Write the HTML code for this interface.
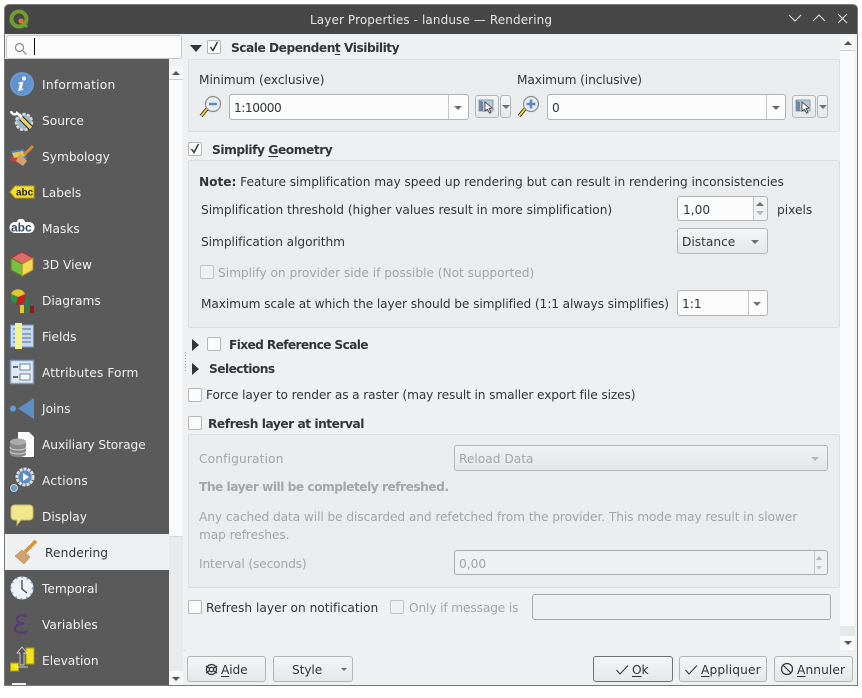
<!DOCTYPE html>
<html><head><meta charset="utf-8"><style>
html,body{margin:0;padding:0;background:#fff;width:862px;height:698px;overflow:hidden}
*{box-sizing:border-box}
body{font-family:"DejaVu Sans","Liberation Sans",sans-serif;font-size:12.2px;color:#31363b}
#w{position:absolute;left:4px;top:4px;width:854px;height:682px;background:#7a7a7a;border-radius:5px 5px 0 0}
.a{position:absolute}
.t{position:absolute;white-space:nowrap;line-height:18px;height:18px;transform:translateY(1px)}
.b{font-weight:bold}
.d{color:#a3a5a7}
.s{color:#f2f2f2}
.g{position:absolute;left:188px;width:652px;background:#ebecee;border:1px solid #dcdee0;border-radius:2px}
.c{position:absolute;width:14px;height:14px;background:#fcfcfc;border:1px solid #b5b6b8;border-radius:2px}
.c.dis{background:#eff0f1;border-color:#c3c4c6}
.f{position:absolute;background:#fcfcfc;border:1px solid #b3b5b7;border-radius:3px}
.btn{position:absolute;background:linear-gradient(#f4f5f5,#e6e7e8);border:1px solid #b3b5b7;border-radius:3px}
.dv{position:absolute;top:0;bottom:0;width:1px;background:#c4c6c8}
.ar{position:absolute;width:0;height:0;border-left:4px solid transparent;border-right:4px solid transparent;border-top:4px solid #6d7073}
.up{position:absolute;width:0;height:0;border-left:4px solid transparent;border-right:4px solid transparent;border-bottom:4px solid #6d7073}
svg{position:absolute;overflow:visible}
u{text-decoration-thickness:1px;text-underline-offset:2px}
</style></head><body>
<div id="w"></div>
<div class="a" style="left:5px;top:5px;width:852px;height:29px;background:#474747;border-radius:4px 4px 0 0"></div>
<div class="a" style="left:5px;top:34px;width:852px;height:651px;background:#eff0f1"></div>

<svg style="left:9px;top:9px" width="21" height="21" viewBox="0 0 21 21"><circle cx="10" cy="10" r="7.5" fill="none" stroke="#6f9e2e" stroke-width="4"/><path d="M11 11l7 7" stroke="#6f9e2e" stroke-width="3"/><circle cx="12" cy="12" r="2.5" fill="#e0762c"/></svg>
<div class="t s" style="left:310px;top:10px;font-size:12px;color:#e6e6e6;letter-spacing:.11px">Layer Properties - landuse — Rendering</div>
<svg style="left:788px;top:13px" width="64" height="12" viewBox="0 0 64 12" fill="none" stroke="#e8e8e8" stroke-width="1"><path d="M1 2l6 6 6-6M25 8l6-6 6 6M50 1l9 9M59 1l-9 9"/></svg>

<!-- search -->
<div class="a" style="left:6px;top:35px;width:176px;height:24px;background:#fcfcfc;border:1px solid #c4c6c8;border-radius:3px"></div>
<svg style="left:14px;top:42px" width="14" height="14" fill="none" stroke="#8a8a8a" stroke-width="1.2"><circle cx="5.5" cy="5.5" r="4"/><path d="M8.5 8.5l4 4"/></svg>
<div class="a" style="left:34px;top:38px;width:1px;height:17px;background:#111"></div>

<!-- sidebar -->
<div class="a" style="left:5px;top:59px;width:164px;height:626px;background:#5a5a5a"></div>
<div class="a" style="left:5px;top:534px;width:164px;height:36px;background:#eff0f1"></div>
<div class="a" style="left:169px;top:59px;width:14px;height:626px;background:#eff0f1"></div>
<div class="a" style="left:169px;top:66px;width:14px;height:470px;background:#fafafa"></div>
<div class="a" style="left:169px;top:536px;width:14px;height:135px;background:#e9eaeb;border-top:1px solid #d5d6d8"></div>
<div class="a" style="left:169px;top:66px;width:14px;height:14px;background:#f8f8f8;border-bottom:1px solid #c9cbcd"></div>
<div class="a" style="left:169px;top:671px;width:14px;height:14px;background:#f8f8f8"></div>
<div class="up" style="left:172px;top:71px;border-bottom-color:#555"></div>
<div class="ar" style="left:172px;top:677px;border-top-color:#555"></div>

<div class="t s" style="left:42px;top:75px;letter-spacing:.27px">Information</div>
<div class="t s" style="left:42px;top:111px">Source</div>
<div class="t s" style="left:42px;top:147px">Symbology</div>
<div class="t s" style="left:42px;top:183px">Labels</div>
<div class="t s" style="left:42px;top:219px">Masks</div>
<div class="t s" style="left:42px;top:255px">3D View</div>
<div class="t s" style="left:42px;top:291px">Diagrams</div>
<div class="t s" style="left:42px;top:327px">Fields</div>
<div class="t s" style="left:42px;top:363px;letter-spacing:.12px">Attributes Form</div>
<div class="t s" style="left:42px;top:399px">Joins</div>
<div class="t s" style="left:42px;top:435px;letter-spacing:-.06px">Auxiliary Storage</div>
<div class="t s" style="left:42px;top:471px;letter-spacing:.2px">Actions</div>
<div class="t s" style="left:42px;top:507px">Display</div>
<div class="t" style="left:45px;top:543px;letter-spacing:.1px">Rendering</div>
<div class="t s" style="left:42px;top:579px">Temporal</div>
<div class="t s" style="left:42px;top:615px">Variables</div>
<div class="t s" style="left:42px;top:651px">Elevation</div>

<svg style="left:10px;top:72px" width="24" height="24" viewBox="0 0 24 24"><circle cx="12" cy="12" r="12" fill="#6a9bd2"/><circle cx="12" cy="12" r="10" fill="#5f92cf"/><path d="M8.500 10.500l5-1-2 7.500 2-.5-.5 1.500-5 1 2-7.500-2 .5z" fill="#fff"/><circle cx="14" cy="6.500" r="2" fill="#fff"/></svg>
<svg style="left:10px;top:108px" width="24" height="24" viewBox="0 0 24 24"><circle cx="14" cy="14" r="8" fill="#9fb4cf" stroke="#d8d8d8" stroke-width="2.500" stroke-dasharray="3 1.500"/><path d="M1 3c1 4 5 4 6 2l5 5" stroke="#fff" stroke-width="2.500" fill="none"/><path d="M11 10l10 10" stroke="#222" stroke-width="5.500"/><path d="M11 10l10 10" stroke="#ecd25b" stroke-width="3.500"/></svg>
<svg style="left:10px;top:145px" width="24" height="22" viewBox="0 0 24 22"><path d="M1 6l13-2 3 10L4 12z" fill="#4c7fc0"/><path d="M1 12l10 0 3 7-4 0L0 15z" fill="#d13a3a"/><path d="M2 8l11-2 2 5-11 2z" fill="#e5c94d"/><path d="M10 8l7 8-4 5-7-5z" fill="#d3a36b"/><path d="M14 10l9-9" stroke="#d88a32" stroke-width="3"/></svg>
<svg style="left:10px;top:185px" width="24" height="14" viewBox="0 0 24 14"><path d="M5 1h19v12H5L0 7z" fill="#f5dd29" stroke="#b89f10"/><text x="6" y="10.5" font-family="Liberation Sans" font-size="10" font-weight="bold" fill="#222">abc</text></svg>
<svg style="left:9px;top:219px" width="26" height="16" viewBox="0 0 26 16"><rect x="0.5" y="3" width="25" height="11" rx="5.5" fill="#fff"/><rect x="8" y="0" width="8" height="6" rx="3" fill="#fff"/><text x="2" y="12.5" font-family="Liberation Sans" font-size="12" font-weight="bold" fill="#3a4a66">abc</text></svg>
<svg style="left:10px;top:251px" width="24" height="26" viewBox="0 0 24 26"><path d="M12 1l11 6-11 6L1 7z" fill="#e06a6a" stroke="#a33"/><path d="M1 7l11 6v12L1 19z" fill="#7bc043" stroke="#597f20"/><path d="M23 7l-11 6v12l11-6z" fill="#f3d94e" stroke="#a6902a"/></svg>
<svg style="left:10px;top:288px" width="24" height="26" viewBox="0 0 24 26"><circle cx="8" cy="9" r="7.5" fill="#c21f1f"/><path d="M8 9L1 6a7.500 7.500 0 0 1 14 0z" fill="#e6c42c"/><path d="M8 9L1 6a7.500 7.500 0 0 0 5 10z" fill="#2a9444"/><rect x="10" y="17" width="4" height="8" fill="#ecc51d"/><rect x="15" y="10" width="4" height="15" fill="#2a7d4a"/><rect x="20" y="18" width="4" height="7" fill="#8c1d1d"/></svg>
<svg style="left:10px;top:323px" width="24" height="26" viewBox="0 0 24 26"><rect x="0.500" y="2" width="23" height="22" fill="#c7d8ec" stroke="#6e93bf"/><path d="M3 6h18M3 11h18M3 15h18M3 19h18" stroke="#6e93bf" stroke-width="1.500"/><rect x="5" y="0" width="7" height="26" fill="#f4f28a"/></svg>
<svg style="left:10px;top:360px" width="24" height="24" viewBox="0 0 24 24"><rect x="0.500" y="0.500" width="23" height="23" fill="#e3e8ee" stroke="#7c9dc3" stroke-width="1.500"/><rect x="10" y="4" width="10" height="6" fill="#fff" stroke="#5b84b5"/><rect x="10" y="14" width="10" height="6" fill="#fff" stroke="#5b84b5"/><path d="M3 7h5M3 17h5" stroke="#4d6f99" stroke-width="2"/></svg>
<svg style="left:9px;top:397px" width="26" height="23" viewBox="0 0 26 23"><circle cx="4" cy="11.500" r="3" fill="#6a9bd2"/><path d="M25 1v21L9 11.500z" fill="#5f8ec4"/></svg>
<svg style="left:9px;top:431px" width="26" height="27" viewBox="0 0 26 27"><path d="M9 1h11l5 5v20H9z" fill="#fff"/><ellipse cx="9" cy="11" rx="8" ry="3.500" fill="#aaa"/><path d="M1 11v12c0 4 16 4 16 0V11c0 4-16 4-16 0z" fill="#888"/><path d="M1 16c0 4 16 4 16 0M1 20c0 4 16 4 16 0" stroke="#ccc" fill="none"/></svg>
<svg style="left:9px;top:467px" width="26" height="26" viewBox="0 0 26 26"><circle cx="16" cy="10" r="8" fill="#5c8cc4" stroke="#ddd" stroke-width="3" stroke-dasharray="3 1"/><path d="M14 6l6 4-6 4z" fill="#fff"/><circle cx="5" cy="21" r="3.500" fill="#6a9bd2" stroke="#ccc"/></svg>
<svg style="left:10px;top:504px" width="24" height="23" viewBox="0 0 24 23"><path d="M5 1h14q4 0 4 4v7q0 4-4 4H11l-4 5 0-5H5q-4 0-4-4V5q0-4 4-4z" fill="#f0e68c" stroke="#c9b95c"/></svg>
<svg style="left:14px;top:540px" width="24" height="25" viewBox="0 0 24 25"><path d="M8 10l8 7-6 7-9-8z" fill="#cfa36e" stroke="#a37a48" stroke-width=".5"/><path d="M11 12l11-11" stroke="#d8913f" stroke-width="3.500"/></svg>
<svg style="left:10px;top:576px" width="24" height="24" viewBox="0 0 24 24"><circle cx="12" cy="12" r="11.500" fill="#eef1f5"/><circle cx="12" cy="12" r="10.700" fill="none" stroke="#7ea3cc" stroke-width="1.500" stroke-dasharray="1.500 4"/><path d="M12 4v9l5 4" stroke="#444" stroke-width="1.300" fill="none"/></svg>
<svg style="left:13px;top:614px" width="17" height="20" viewBox="0 0 17 20" fill="none" stroke="#5c3a78" stroke-width="2.400"><path d="M14 2.500C10 .5 4 1 4 5c0 3 3 4.500 7 4.500C6 9.500 2 11 2 14.500c0 4.500 8 5 13 2.500"/></svg>
<svg style="left:10px;top:646px" width="24" height="26" viewBox="0 0 24 26"><rect x="16" y="2" width="8" height="16" fill="#f3e21b" stroke="#a89a12"/><rect x="0.500" y="17" width="8" height="8" fill="#f3e21b" stroke="#a89a12"/><path d="M12 1l-5 6h3v12h4V7h3zM5 21h13" fill="#555" stroke="#eee" stroke-width=".7"/></svg>
<div class="a" style="left:12px;top:683px;width:14px;height:2px;background:#eee"></div>

<!-- right scrollbar -->
<div class="a" style="left:840px;top:36px;width:15px;height:614px;background:#fafafa"></div>
<div class="a" style="left:840px;top:36px;width:15px;height:15px;background:#f6f6f6;border-bottom:1px solid #c9cbcd"></div>
<div class="up" style="left:844px;top:41px;border-bottom-color:#555"></div>
<div class="a" style="left:840px;top:626px;width:15px;height:10px;background:#e6e7e8"></div>
<div class="ar" style="left:844px;top:641px;border-top-color:#555"></div>
<div class="a" style="left:183px;top:650px;width:3px;height:1px;background:#dcdee0"></div>
<svg style="left:185px;top:352px" width="2" height="20"><path d="M.5 0v20" stroke="#a6a8aa" stroke-dasharray="1 2"/></svg>

<!-- group 1 -->
<svg style="left:190px;top:45px" width="12" height="7"><path d="M0 0h12L6 7z" fill="#31363b"/></svg>
<div class="c" style="left:207px;top:40px"></div>
<svg style="left:209px;top:41px" width="11" height="11" fill="none" stroke="#31363b" stroke-width="1.500"><path d="M1.500 6l2.500 3.500L8.500 1"/></svg>
<div class="t b" style="left:231px;top:38px;letter-spacing:-.48px">Scale Dependen<u>t</u> Visibility</div>
<div class="g" style="top:59px;height:73px"></div>
<div class="t" style="left:199px;top:70px;letter-spacing:-.05px">Minimum (exclusive)</div>
<div class="t" style="left:517px;top:70px;letter-spacing:-.1px">Maximum (inclusive)</div>
<svg style="left:199px;top:95px" width="24" height="24" viewBox="0 0 24 24"><circle cx="14" cy="9" r="7.500" fill="#e8edf3" stroke="#8a8f94" stroke-width="1.200"/><path d="M10 9h8" stroke="#5b8bc2" stroke-width="2.500"/><path d="M8 14l-6 7" stroke="#222" stroke-width="3.500"/><path d="M8 14l-6 7" stroke="#ecd23a" stroke-width="2"/></svg>
<div class="f" style="left:229px;top:94px;width:240px;height:26px"><div class="dv" style="left:218px"></div><div class="ar" style="left:224px;top:11px"></div></div>
<div class="t" style="left:234px;top:98px;letter-spacing:-.47px">1:10000</div>
<div class="btn" style="left:475px;top:95px;width:24px;height:23px"></div>
<svg style="left:479px;top:99px" width="16" height="15" viewBox="0 0 16 15"><rect x="0" y="1" width="14" height="11" fill="#b9c6d6" stroke="#8da0b5"/><path d="M0 1l4 2v9H0z" fill="#6f87a3"/><path d="M6 3l7 6-3 .5 2 4-1.500 .7-2-4L6 12z" fill="#fff" stroke="#333" stroke-width=".8"/></svg>
<div class="btn" style="left:500px;top:95px;width:11px;height:23px"><div class="ar" style="left:1px;top:9px"></div></div>
<svg style="left:517px;top:95px" width="24" height="24" viewBox="0 0 24 24"><circle cx="14" cy="9" r="7.500" fill="#e8edf3" stroke="#8a8f94" stroke-width="1.200"/><path d="M9.500 9h9M14 4.500v9" stroke="#5b8bc2" stroke-width="2.500"/><path d="M8 14l-6 7" stroke="#222" stroke-width="3.500"/><path d="M8 14l-6 7" stroke="#ecd23a" stroke-width="2"/></svg>
<div class="f" style="left:547px;top:94px;width:239px;height:26px"><div class="dv" style="left:218px"></div><div class="ar" style="left:224px;top:11px"></div></div>
<div class="t" style="left:552px;top:98px">0</div>
<div class="btn" style="left:792px;top:95px;width:24px;height:23px"></div>
<svg style="left:796px;top:99px" width="16" height="15" viewBox="0 0 16 15"><rect x="0" y="1" width="14" height="11" fill="#b9c6d6" stroke="#8da0b5"/><path d="M0 1l4 2v9H0z" fill="#6f87a3"/><path d="M6 3l7 6-3 .5 2 4-1.500 .7-2-4L6 12z" fill="#fff" stroke="#333" stroke-width=".8"/></svg>
<div class="btn" style="left:817px;top:95px;width:11px;height:23px"><div class="ar" style="left:1px;top:9px"></div></div>

<!-- group 2 -->
<div class="c" style="left:188px;top:142px"></div>
<svg style="left:190px;top:143px" width="11" height="11" fill="none" stroke="#31363b" stroke-width="1.500"><path d="M1.500 6l2.500 3.500L8.500 1"/></svg>
<div class="t b" style="left:212px;top:140px;letter-spacing:-.43px">Simplify <u>G</u>eometry</div>
<div class="g" style="top:160px;height:168px"></div>
<div class="t" style="left:199px;top:172px;letter-spacing:-.045px"><b>Note:</b> Feature simplification may speed up rendering but can result in rendering inconsistencies</div>
<div class="t" style="left:201px;top:200px;letter-spacing:-.04px">Simplification threshold (higher values result in more simplification)</div>
<div class="f" style="left:677px;top:196px;width:91px;height:25px;background:linear-gradient(90deg,#fcfcfc 75px,#f0f1f2 75px)"><div class="dv" style="left:75px"></div></div>
<div class="t" style="left:683px;top:200px">1,00</div>
<div class="up" style="left:756px;top:202px"></div>
<div class="ar" style="left:756px;top:211px;border-top-color:#b5b7b9"></div>
<div class="t" style="left:777px;top:200px">pixels</div>
<div class="t" style="left:201px;top:232px;letter-spacing:-.06px">Simplification algorithm</div>
<div class="btn" style="left:677px;top:228px;width:91px;height:26px"><div class="ar" style="left:73px;top:11px"></div></div>
<div class="t" style="left:682px;top:232px">Distance</div>
<div class="c dis" style="left:200px;top:265px"></div>
<div class="t d" style="left:218px;top:263px;letter-spacing:-.02px">Simplify on provider side if possible (Not supported)</div>
<div class="t" style="left:201px;top:294px;letter-spacing:-.1px">Maximum scale at which the layer should be simplified (1:1 always simplifies)</div>
<div class="f" style="left:677px;top:290px;width:91px;height:26px"><div class="dv" style="left:70px"></div><div class="ar" style="left:75px;top:11px"></div></div>
<div class="t" style="left:682px;top:294px">1:1</div>

<!-- collapsed -->
<svg style="left:192px;top:339px" width="7" height="12"><path d="M0 0l7 6-7 6z" fill="#31363b"/></svg>
<div class="c" style="left:207px;top:337px"></div>
<div class="t b" style="left:229px;top:335px;letter-spacing:-.63px">Fixed Reference Scale</div>
<svg style="left:192px;top:363px" width="7" height="12"><path d="M0 0l7 6-7 6z" fill="#31363b"/></svg>
<div class="t b" style="left:209px;top:359px;letter-spacing:-.55px">Selections</div>
<div class="c" style="left:188px;top:388px"></div>
<div class="t" style="left:206px;top:385px;letter-spacing:-.12px">Force layer to render as a raster (may result in smaller export file sizes)</div>
<div class="c" style="left:188px;top:416px"></div>
<div class="t b" style="left:208px;top:414px;letter-spacing:-.46px">Refresh layer at interval</div>

<!-- group 3 -->
<div class="g" style="top:434px;height:154px"></div>
<div class="t d" style="left:199px;top:449px;letter-spacing:.15px">Configuration</div>
<div class="btn" style="left:454px;top:445px;width:374px;height:26px;background:linear-gradient(#f0f1f2,#e6e7e8)"><div class="ar" style="left:356px;top:11px;border-top-color:#b5b7b9"></div></div>
<div class="t d" style="left:459px;top:449px">Reload Data</div>
<div class="t b d" style="left:199px;top:477px;letter-spacing:-.49px">The layer will be completely refreshed.</div>
<div class="t d" style="left:199px;top:507px;letter-spacing:-.08px">Any cached data will be discarded and refetched from the provider. This mode may result in slower</div>
<div class="t d" style="left:199px;top:525px;letter-spacing:-.08px">map refreshes.</div>
<div class="t d" style="left:199px;top:554px;letter-spacing:-.13px">Interval (seconds)</div>
<div class="f" style="left:454px;top:550px;width:374px;height:25px;background:#eff0f1;border-color:#a9abad"><div class="dv" style="left:359px"></div><div class="up" style="left:361px;top:5px;border-left-width:3.500px;border-right-width:3.500px;border-bottom-color:#b5b7b9"></div><div class="ar" style="left:361px;top:15px;border-left-width:3.500px;border-right-width:3.500px;border-top-color:#c5c7c9"></div></div>
<div class="t d" style="left:459px;top:554px">0,00</div>

<!-- notification -->
<div class="c" style="left:188px;top:600px"></div>
<div class="t" style="left:206px;top:598px;letter-spacing:.01px">Refresh layer on notification</div>
<div class="c dis" style="left:390px;top:600px"></div>
<div class="t d" style="left:409px;top:598px;letter-spacing:-.13px">Only if message is</div>
<div class="f" style="left:532px;top:594px;width:299px;height:26px;background:#eff0f1;border-color:#a9abad"></div>

<!-- buttons -->
<div class="btn" style="left:187px;top:656px;width:79px;height:26px"></div>
<svg style="left:205px;top:663px" width="13" height="13" viewBox="0 0 13 13" fill="none" stroke="#31363b" stroke-width="1.300"><circle cx="6.500" cy="6.500" r="5"/><circle cx="6.500" cy="6.500" r="2.200"/><path d="M1 3l3 2M12 3L9 5M1 10l3-2M12 10L9 8"/></svg>
<div class="t" style="left:221px;top:660px;letter-spacing:-.1px"><u>A</u>ide</div>
<div class="btn" style="left:273px;top:656px;width:80px;height:26px"><div class="ar" style="left:67px;top:11px;border-left-width:3px;border-right-width:3px;border-top-width:3px"></div></div>
<div class="t" style="left:292px;top:660px;letter-spacing:-.1px">Style</div>
<div class="btn" style="left:593px;top:656px;width:80px;height:26px;border-color:#6f7173"></div>
<svg style="left:616px;top:665px" width="13" height="10" fill="none" stroke="#31363b"><path d="M.5 5l3.500 4L12 .5"/></svg>
<div class="t" style="left:632px;top:660px;letter-spacing:-.1px"><u>O</u>k</div>
<div class="btn" style="left:679px;top:656px;width:88px;height:26px"></div>
<svg style="left:685px;top:665px" width="13" height="10" fill="none" stroke="#31363b"><path d="M.5 5l3.500 4L12 .5"/></svg>
<div class="t" style="left:701px;top:660px;letter-spacing:.13px"><u>A</u>ppliquer</div>
<div class="btn" style="left:774px;top:656px;width:79px;height:26px"></div>
<svg style="left:780px;top:662px" width="14" height="14" fill="none" stroke="#31363b" stroke-width="1.200"><circle cx="7" cy="7" r="5.500"/><path d="M3 3l8 8"/></svg>
<div class="t" style="left:797px;top:660px;letter-spacing:.1px"><u>A</u>nnuler</div>
</body></html>
